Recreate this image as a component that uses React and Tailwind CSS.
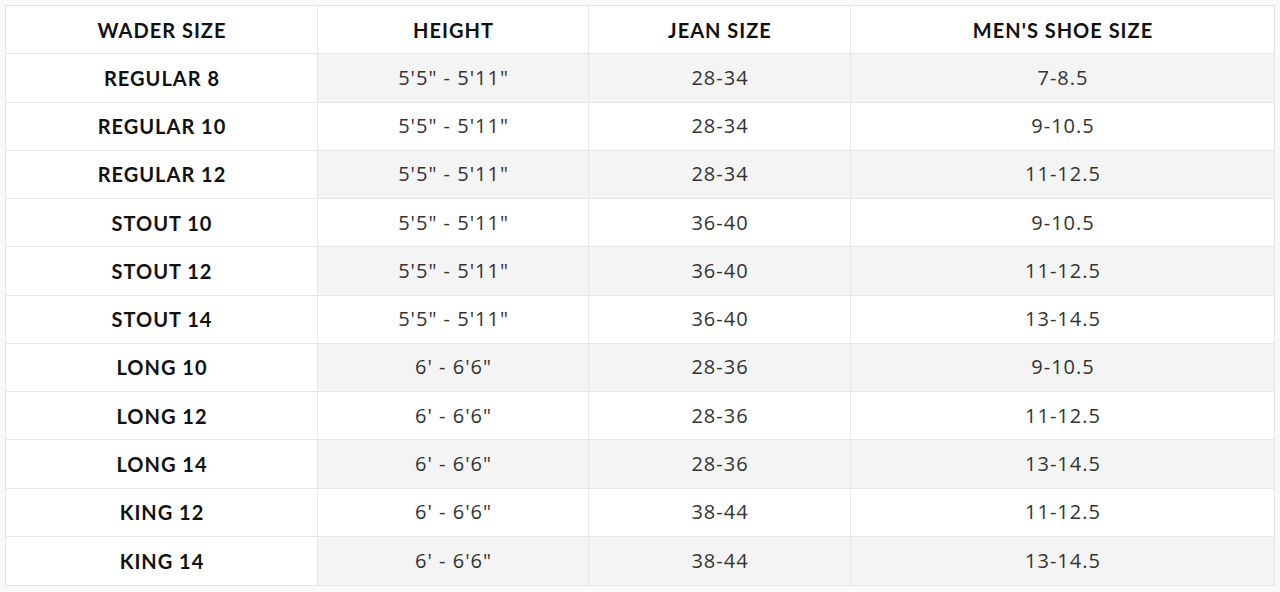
import React from "react";

const rows = [
  ["REGULAR 8", `5'5" - 5'11"`, "28-34", "7-8.5"],
  ["REGULAR 10", `5'5" - 5'11"`, "28-34", "9-10.5"],
  ["REGULAR 12", `5'5" - 5'11"`, "28-34", "11-12.5"],
  ["STOUT 10", `5'5" - 5'11"`, "36-40", "9-10.5"],
  ["STOUT 12", `5'5" - 5'11"`, "36-40", "11-12.5"],
  ["STOUT 14", `5'5" - 5'11"`, "36-40", "13-14.5"],
  ["LONG 10", `6' - 6'6"`, "28-36", "9-10.5"],
  ["LONG 12", `6' - 6'6"`, "28-36", "11-12.5"],
  ["LONG 14", `6' - 6'6"`, "28-36", "13-14.5"],
  ["KING 12", `6' - 6'6"`, "38-44", "11-12.5"],
  ["KING 14", `6' - 6'6"`, "38-44", "13-14.5"],
];

const cols = "grid grid-cols-[312px_271px_262px_1fr]";

export default function App() {
  return (
    <div className="w-[1280px] h-[592px] bg-[#f9f9f9] pt-[5px] pl-[5px] overflow-hidden">
      <div className="w-[1270px] border border-[#e4e4e4] bg-white">
        <div className={`${cols} h-[48.27px] border-b border-[#e6e6e6] bg-white`}>
          {["WADER SIZE", "HEIGHT", "JEAN SIZE", "MEN'S SHOE SIZE"].map((h, i) => (
            <div
              key={h}
              className={`flex items-center justify-center pl-[1px] font-['Lato',sans-serif] font-bold text-[20px] tracking-[1px] text-[#111] ${i < 3 ? "border-r border-[#e6e6e6]" : ""}`}
            >
              {h}
            </div>
          ))}
        </div>
        {rows.map((r, ri) => (
          <div
            key={ri}
            className={`${cols} h-[48.27px] ${ri < rows.length - 1 ? "border-b border-[#e6e6e6]" : ""}`}
          >
            {r.map((c, ci) => (
              <div
                key={ci}
                className={`flex items-center justify-center pl-[1px] text-[20px] tracking-[1px] ${
                  ci === 0
                    ? "bg-white font-['Lato',sans-serif] font-bold text-[#111]"
                    : `font-['Open_Sans',sans-serif] text-[#333] ${ri % 2 === 0 ? "bg-[#f4f4f4]" : "bg-white"}`
                } ${ci < 3 ? "border-r border-[#e6e6e6]" : ""}`}
              >
                {c}
              </div>
            ))}
          </div>
        ))}
      </div>
    </div>
  );
}
